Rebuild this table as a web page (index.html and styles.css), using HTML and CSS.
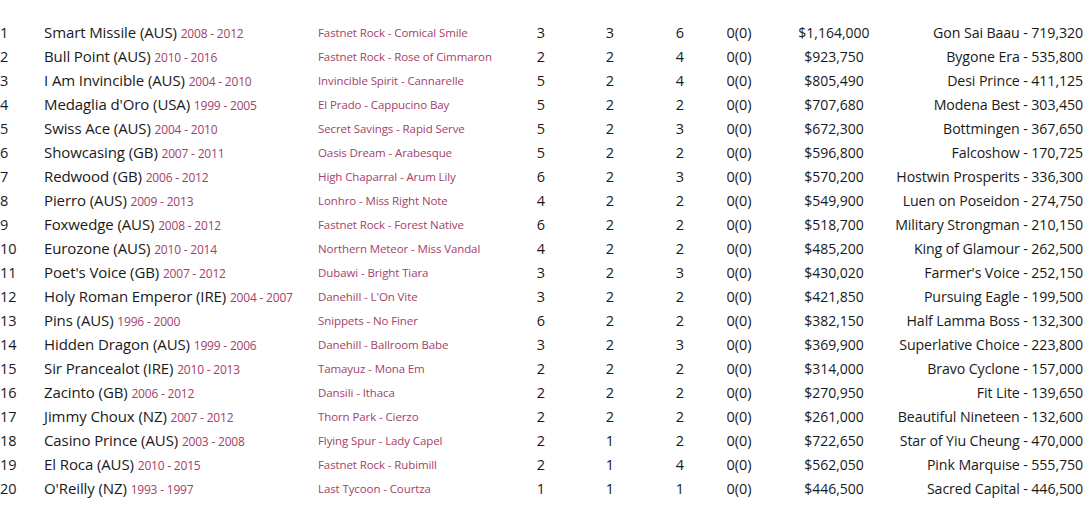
FILE: index.html
```html
<!DOCTYPE html>
<html>
<head>
<meta charset="utf-8">
<link rel="stylesheet" href="styles.css">
</head>
<body>
<div class="table" id="t"></div>
<script>
const rows = [
["1","Smart Missile (AUS)","2008 - 2012","Fastnet Rock - Comical Smile","3","3","6","0(0)","$1,164,000","Gon Sai Baau - 719,320"],
["2","Bull Point (AUS)","2010 - 2016","Fastnet Rock - Rose of Cimmaron","2","2","4","0(0)","$923,750","Bygone Era - 535,800"],
["3","I Am Invincible (AUS)","2004 - 2010","Invincible Spirit - Cannarelle","5","2","4","0(0)","$805,490","Desi Prince - 411,125"],
["4","Medaglia d'Oro (USA)","1999 - 2005","El Prado - Cappucino Bay","5","2","2","0(0)","$707,680","Modena Best - 303,450"],
["5","Swiss Ace (AUS)","2004 - 2010","Secret Savings - Rapid Serve","5","2","3","0(0)","$672,300","Bottmingen - 367,650"],
["6","Showcasing (GB)","2007 - 2011","Oasis Dream - Arabesque","5","2","2","0(0)","$596,800","Falcoshow - 170,725"],
["7","Redwood (GB)","2006 - 2012","High Chaparral - Arum Lily","6","2","3","0(0)","$570,200","Hostwin Prosperits - 336,300"],
["8","Pierro (AUS)","2009 - 2013","Lonhro - Miss Right Note","4","2","2","0(0)","$549,900","Luen on Poseidon - 274,750"],
["9","Foxwedge (AUS)","2008 - 2012","Fastnet Rock - Forest Native","6","2","2","0(0)","$518,700","Military Strongman - 210,150"],
["10","Eurozone (AUS)","2010 - 2014","Northern Meteor - Miss Vandal","4","2","2","0(0)","$485,200","King of Glamour - 262,500"],
["11","Poet's Voice (GB)","2007 - 2012","Dubawi - Bright Tiara","3","2","3","0(0)","$430,020","Farmer's Voice - 252,150"],
["12","Holy Roman Emperor (IRE)","2004 - 2007","Danehill - L'On Vite","3","2","2","0(0)","$421,850","Pursuing Eagle - 199,500"],
["13","Pins (AUS)","1996 - 2000","Snippets - No Finer","6","2","2","0(0)","$382,150","Half Lamma Boss - 132,300"],
["14","Hidden Dragon (AUS)","1999 - 2006","Danehill - Ballroom Babe","3","2","3","0(0)","$369,900","Superlative Choice - 223,800"],
["15","Sir Prancealot (IRE)","2010 - 2013","Tamayuz - Mona Em","2","2","2","0(0)","$314,000","Bravo Cyclone - 157,000"],
["16","Zacinto (GB)","2006 - 2012","Dansili - Ithaca","2","2","2","0(0)","$270,950","Fit Lite - 139,650"],
["17","Jimmy Choux (NZ)","2007 - 2012","Thorn Park - Cierzo","2","2","2","0(0)","$261,000","Beautiful Nineteen - 132,600"],
["18","Casino Prince (AUS)","2003 - 2008","Flying Spur - Lady Capel","2","1","2","0(0)","$722,650","Star of Yiu Cheung - 470,000"],
["19","El Roca (AUS)","2010 - 2015","Fastnet Rock - Rubimill","2","1","4","0(0)","$562,050","Pink Marquise - 555,750"],
["20","O'Reilly (NZ)","1993 - 1997","Last Tycoon - Courtza","1","1","1","0(0)","$446,500","Sacred Capital - 446,500"]
];
const t = document.getElementById('t');
for (const r of rows) {
  const d = document.createElement('div');
  d.className = 'row';
  d.innerHTML = `<span class="rank">${r[0]}</span><span class="name">${r[1]} <span class="yrs">${r[2]}</span></span><span class="sire">${r[3]}</span><span class="c">${r[4]}</span><span class="c">${r[5]}</span><span class="c">${r[6]}</span><span class="c">${r[7]}</span><span class="c money">${r[8]}</span><span class="best">${r[9]}</span>`;
  t.appendChild(d);
}
</script>
</body>
</html>
```
FILE: styles.css
```css
html, body { margin: 0; padding: 0; background: #fff; }
body { font-family: "Open Sans", Lato, sans-serif; color: #1a1a1a; }
.table { padding-top: 20px; width: 1083px; }
.row {
  display: grid;
  grid-template-columns: 44px 274px 196px 54px 84px 56px 62px 128px 185px;
  height: 24px;
  align-items: center;
  font-size: 14.5px;
  white-space: nowrap;
}
.rank { font-size: 14.5px; }
.name { font-size: 15px; letter-spacing: -0.1px; }
.yrs { color: #a4416a; font-size: 12px; letter-spacing: -0.2px; }
.sire { color: #a4416a; font-size: 11.5px; letter-spacing: -0.1px; }
.c { text-align: center; }
.money { font-size: 14px; }
.best { justify-self: end; text-align: right; font-size: 14.2px; letter-spacing: -0.1px; }
```
